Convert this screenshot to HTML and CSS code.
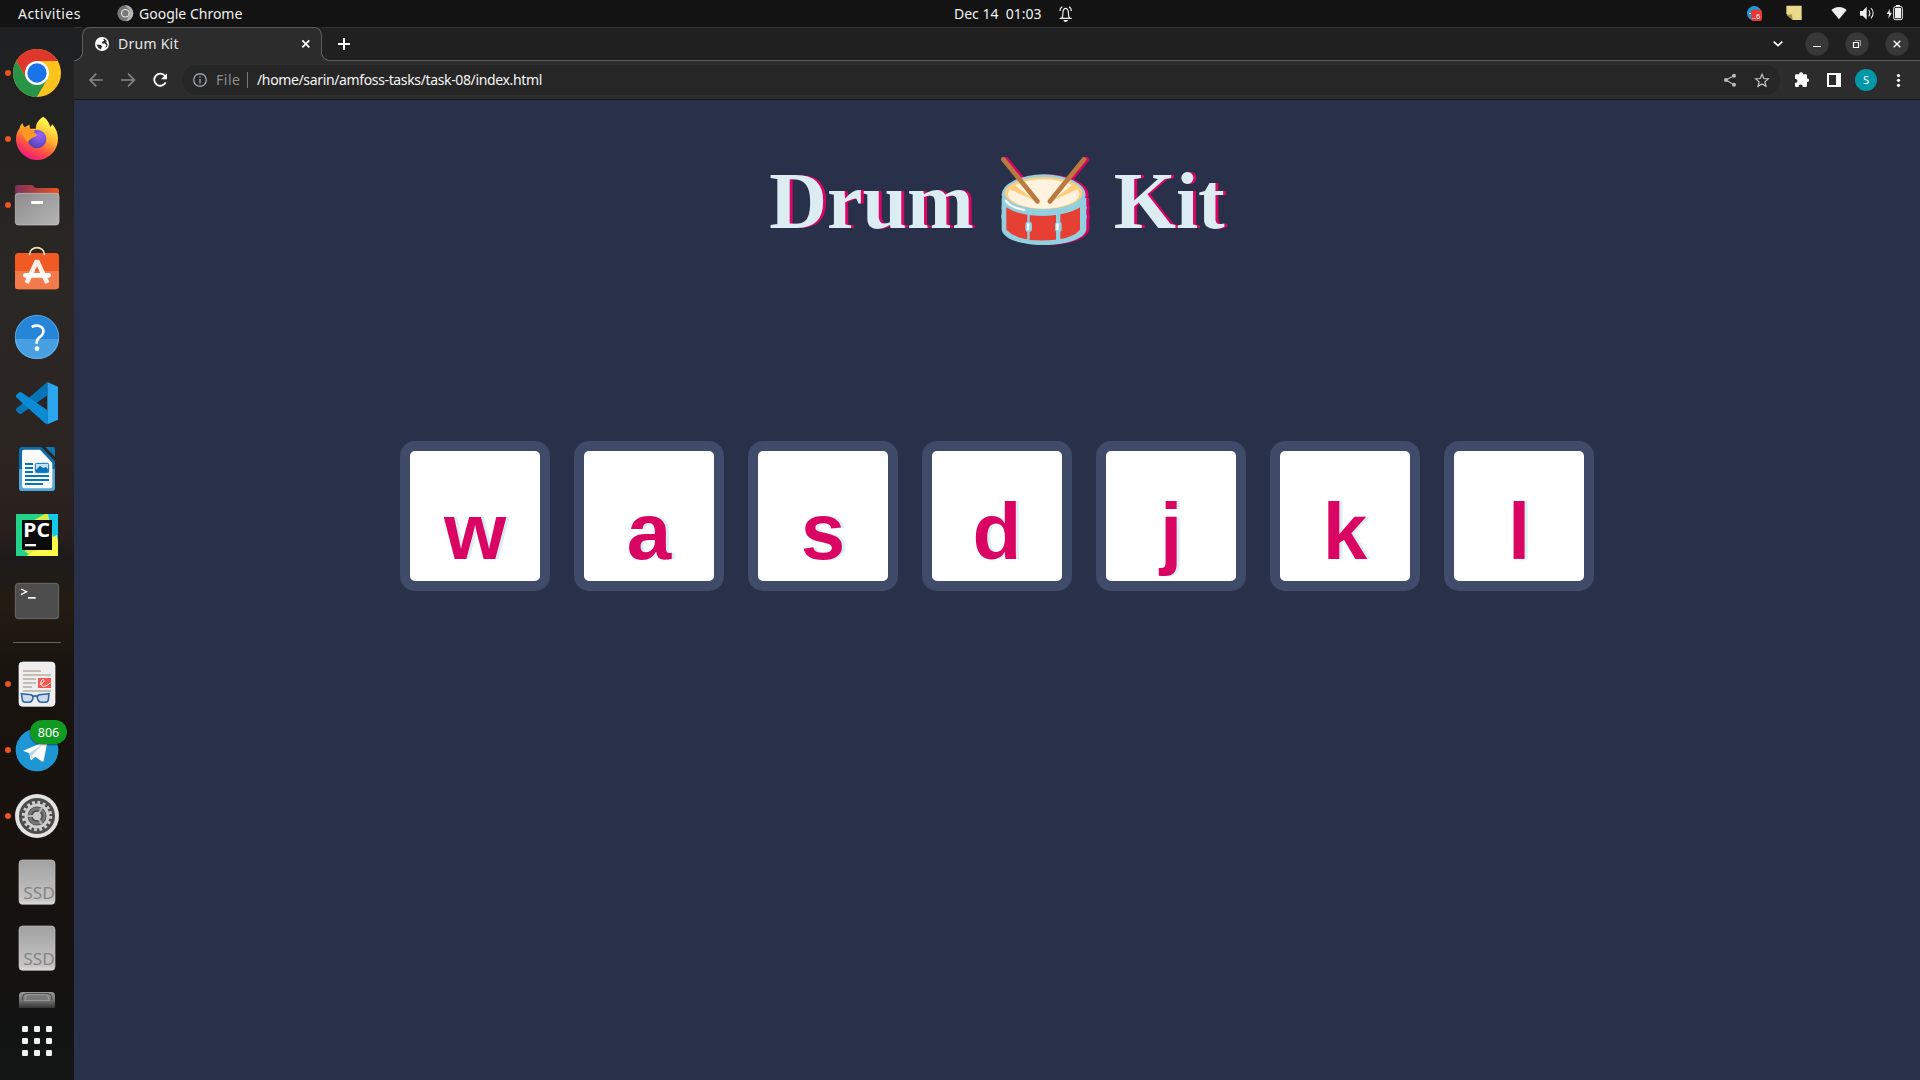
FILE: index.html
```html
<!DOCTYPE html>
<html lang="en">
<head>
<meta charset="utf-8">
<title>Drum Kit</title>
<link rel="stylesheet" href="styles.css">
</head>
<body>
<header class="topbar">
  <span class="activities">Activities</span>
  <span class="app-menu">
    <svg width="17" height="17" viewBox="0 0 17 17"><circle cx="8.3" cy="8.3" r="8" fill="#777"/><path d="M8 .3A8 8 0 0 1 16.300 8.300 8 8 0 0 1 9 16.300L12.500 10V5z" fill="#b5b5b5"/><circle cx="8.300" cy="8.300" r="4.300" fill="#e8e8e8"/><circle cx="8.300" cy="8.300" r="3.200" fill="#777"/></svg>
    <span class="app-name">Google Chrome</span>
  </span>
  <span class="clock">Dec 14&nbsp; 01:03</span>
  <svg class="bell" width="16" height="18" viewBox="388 12 48 54" fill="none" stroke="#eee" stroke-width="3.500"><path d="M396 52c5-5 3-12 4-20 1-7 4-10 8-10s7 3 8 10c1 8-1 15 4 20zM390 52h36M391 30c0-7 3-11 7-13M425 30c0-7-3-11-7-13"/><path d="M401 57h14c-1 8-13 8-14 0z" fill="#eee" stroke="none"/></svg>
  <svg class="tray" width="180" height="27" viewBox="180 0 540 81">
    <circle cx="223" cy="40" r="22" fill="#2497d5"/><path d="M206 41l17-7v10z" fill="#fff"/><rect x="213" y="29" width="33" height="34" rx="7" fill="#e53935"/><text x="216" y="57" class="tray-count">..6</text>
    <path d="M319 17h46v43h-27l-19-19z" fill="#ead98a"/><path d="M319 45l17-2 2 17z" fill="#a69345"/>
    <path d="M454 30c13-12 33-12 46 0l-23 28z" fill="#eee"/>
    <path d="M540 33h8l12-13v39l-12-12h-8z" fill="#eee"/><path d="M566 30q7 9 0 19M573 24q13 15 0 31" fill="none" stroke="#eee" stroke-width="3.200"/>
    <path d="M630 26l-10 16h7l-2 14 11-18h-7z" fill="#eee"/><rect x="641" y="20" width="26" height="39" rx="5" fill="none" stroke="#eee" stroke-width="3"/><path d="M645 24h18v31h-18zM648 15h12v5h-12z" fill="#eee"/>
  </svg>
</header>
<div class="desktop">
  <nav class="dock">
    <svg class="app" viewBox="0 30 222 198">
      <circle cx="24" cy="129" r="9" class="dot"/>
      <circle cx="111" cy="129" r="72" fill="#fcc31e"/><path d="M111 57a72 72 0 0 1 62 36H111L80 147 49 93a72 72 0 0 1 62-36z" fill="#df372c"/><path d="M49 93a72 72 0 0 0 62 108l31-54-62 0z" fill="#279447"/><circle cx="111" cy="129" r="36" fill="#fff"/><circle cx="111" cy="129" r="29" fill="#1a73e8"/>
    </svg>
    <svg class="app" viewBox="0 228 222 198">
      <defs><linearGradient id="fox" x1=".8" y1="0" x2=".3" y2="1"><stop offset=".15" stop-color="#fff04a"/><stop offset=".45" stop-color="#ffae2e"/><stop offset=".7" stop-color="#ff5540"/><stop offset="1" stop-color="#ed1382"/></linearGradient><radialGradient id="orb" cx=".65" cy=".3" r=".8"><stop offset="0" stop-color="#9a62ff"/><stop offset="1" stop-color="#4c3fac"/></radialGradient></defs>
      <circle cx="24" cy="327" r="9" class="dot"/>
      <path d="M130 260c13 9 17 19 21 30 3-1 4-4 5-8 12 12 18 27 18 45a63 63 0 0 1-126 0c0-15 5-25 11-33 1-6 4-11 9-15 0 7 3 11 7 14 4-4 8-8 14-9-1 6 0 9 2 12h17c-2-15 8-28 22-36z" fill="url(#fox)"/>
      <circle cx="111" cy="327" r="28" fill="url(#orb)"/><path d="M108 296c15-9 43 6 41 31 5-20-5-31-16-35z" fill="#ffd83f"/><path d="M66 312c11-7 19 0 31-5 6 2 13 4 14 7-3 8-14 8-18 12-5 5-8 5-9 12-7-6-8-15-18-26z" fill="#ff9a20"/><path d="M60 301q9-13 23-10 8 9 22 13l-10 10q-17-6-35-13z" fill="#ff9725"/>
    </svg>
    <svg class="app" viewBox="0 426 222 198">
      <defs><linearGradient id="folder"><stop stop-color="#7c305b"/><stop offset="1" stop-color="#e95420"/></linearGradient><linearGradient id="drawer" x2="1" y2="1"><stop stop-color="#8d8d8d"/><stop offset="1" stop-color="#b4b4b4"/></linearGradient></defs>
      <circle cx="24" cy="525" r="9" class="dot"/>
      <path d="M45 500v-27q0-8 8-8h42q5 0 10 9h64q8 0 8 8v30z" fill="url(#folder)"/><rect x="46" y="490" width="131" height="95" rx="9" fill="url(#drawer)" stroke="#c9c9c9" stroke-width="2"/><rect x="93" y="513" width="36" height="9" rx="3" fill="#fff"/>
    </svg>
    <svg class="app" viewBox="0 24 222 198">
      <path d="M89 74c0-28 44-28 44 0" fill="none" stroke="#f2deb0" stroke-width="5"/><rect x="45" y="69" width="132" height="109" rx="10" fill="#f15a24"/><path d="M45 123h132v45q0 10-10 10H55q-10 0-10-10z" fill="#f37a4b"/><path d="M89 76v-8M133 76v-8" stroke="#f2deb0" stroke-width="5"/><path d="M80 159L111 92l31 67" fill="none" stroke="#fff0e8" stroke-width="14" stroke-linejoin="bevel"/><rect x="69" y="129" width="84" height="14" rx="7" fill="#fff"/>
    </svg>
    <svg class="app" viewBox="0 222 222 198">
      <circle cx="111" cy="321" r="66" fill="#2585d8"/><path d="M45 327h132a66 60 0 0 1-132 0z" fill="#48a0e3"/><circle cx="111" cy="321" r="65" fill="none" stroke="#77b6ec" stroke-width="2"/><path d="M95 291q17-8 29 0 10 8 4 21-3 6-11 11-7 6-7 18" fill="none" stroke="#fff" stroke-width="8"/><circle cx="111" cy="356" r="7" fill="#fff"/>
    </svg>
    <svg class="app" viewBox="0 420 222 198">
      <path d="M142 456l32 14v99l-32 14z" fill="#2ba5ee"/><path d="M142 456v40L64 551q-4 3-8-1l-7-7q-3-4 1-8z" fill="#0874b8"/><path d="M142 583v-42L64 487q-4-3-8 1l-7 7q-3 4 1 8l85 77z" fill="#0b8bd5"/>
    </svg>
    <svg class="app" viewBox="0 18 222 198">
      <path d="M67 51h57l41 42v80q0 10-10 10H67q-10 0-10-10V61q0-10 10-10z" fill="#0b6ca7"/><path d="M57 117h108v56q0 10-10 10H67q-10 0-10-10z" fill="#51a8d6"/><path d="M72 59h48l37 39v70q0 7-7 7H72q-6 0-6-7V66q0-7 6-7z" fill="#fafafa"/><path d="M136 51h22q7 0 7 7v22z" fill="#1177b0"/><path d="M75 102h24M75 114h24M75 126h24M75 138h72M75 150h72M75 162h54" stroke="#0874b8" stroke-width="6"/><rect x="106" y="100" width="40" height="28" rx="4" fill="#c3e2f3" stroke="#0874b8" stroke-width="3"/><path d="M108 127v-7l12-13 10 8 8-5 7 10v7z" fill="#0874b8"/>
    </svg>
    <svg class="app" viewBox="0 216 222 198">
      <path d="M48 252h126v126H48z" fill="#24d38a"/><path d="M102 270l33-18h10l29 80v46H93l-19-15z" fill="#d8ed48"/><path d="M144 252h30v100l-17-40z" fill="#12c9ec"/><path d="M80 378l90-64 4 20v44z" fill="#fcf84a"/><path d="M66 270h90v90H66z" fill="#0b0b0b"/><text x="70" y="320" class="pc-text" textLength="80" lengthAdjust="spacingAndGlyphs">PC</text><path d="M75 342h33v7H75z" fill="#fff"/>
    </svg>
    <svg class="app" viewBox="0 414 222 198">
      <rect x="46" y="460" width="130" height="106" rx="9" fill="#4d4d4d" stroke="#737373" stroke-width="2.500"/><path d="M63 477l17 8-17 9" fill="none" stroke="#fff" stroke-width="4"/><path d="M84 501h23v5H84z" fill="#fff"/>
    </svg>
    <div class="separator"></div>
    <svg class="app" viewBox="0 3 222 198">
      <circle cx="24" cy="102" r="9" class="dot"/><rect x="57" y="36" width="108" height="133" rx="11" fill="#eee" stroke="#fff" stroke-width="2"/><path d="M69 63h54M69 75h84M69 87h39M69 99h39M69 111h27M69 123h84" stroke="#b5afa2" stroke-width="5"/><path d="M114 84h39v30h-39z" fill="#f3574f"/><path d="M119 103c10 0 18-14 9-14-6 0-9 20 3 20 8 0 14-6 20-10" fill="none" stroke="#fff" stroke-width="3"/><path d="M64 131l29 3q7 2 6 10-3 13-12 13H76q-8 0-9-8zM147 131l-29 3q-7 2-6 10 3 13 12 13h12q8 0 9-8z" fill="#cfdbe9" stroke="#2a62a7" stroke-width="4.500"/><path d="M99 140q6-5 13 0" fill="none" stroke="#2a62a7" stroke-width="5"/>
    </svg>
    <div class="badged">
      <svg class="app" viewBox="0 201 222 198">
        <circle cx="24" cy="300" r="9" class="dot"/><circle cx="111" cy="300" r="64" fill="#1f96d4"/><path d="M69 302l70-29q4-1 3 4l-11 55q-2 5-6 2l-19-14-10 9q-4 3-5-3l-3-16z" fill="#fff"/><path d="M88 310l38-26-28 30-2 13z" fill="#b5d5e7"/>
      </svg>
      <span class="badge">806</span>
    </div>
    <svg class="app" viewBox="0 399 222 198">
      <circle cx="24" cy="498" r="9" class="dot"/><circle cx="111" cy="498" r="66" fill="#e2e2e2"/><circle cx="111" cy="498" r="54" fill="#4c4c4c"/><circle cx="111" cy="498" r="41" fill="none" stroke="#d0d0d0" stroke-width="9" stroke-dasharray="8.500 7.601"/><circle cx="111" cy="498" r="33" fill="none" stroke="#d0d0d0" stroke-width="9"/><circle cx="111" cy="498" r="22" fill="none" stroke="#777" stroke-width="8"/><path d="M111 498H80M111 498l16-27M111 498l16 27" stroke="#b5b5b5" stroke-width="6"/><circle cx="111" cy="498" r="13" fill="#c9c9c9"/>
    </svg>
    <svg class="app" viewBox="0 27 222 198">
      <defs><linearGradient id="disk" x2="0" y2="1"><stop stop-color="#a1a1a1"/><stop offset=".9" stop-color="#c5c5c5"/><stop offset="1" stop-color="#ddd"/></linearGradient></defs>
      <rect x="57" y="60" width="108" height="133" rx="11" fill="url(#disk)" stroke="#c4c4c4" stroke-width="2"/><text x="70" y="177" class="ssd" textLength="95" lengthAdjust="spacingAndGlyphs">SSD</text>
    </svg>
    <svg class="app" viewBox="0 225 222 198">
      <rect x="57" y="258" width="108" height="133" rx="11" fill="url(#disk)" stroke="#c4c4c4" stroke-width="2"/><text x="70" y="375" class="ssd" textLength="95" lengthAdjust="spacingAndGlyphs">SSD</text>
    </svg>
    <svg class="app-cut" viewBox="0 423 222 81">
      <defs><linearGradient id="fade" x2="0" y2="1"><stop stop-color="#999"/><stop offset=".5" stop-color="#777"/><stop offset="1" stop-color="#333"/></linearGradient></defs>
      <path d="M57 504v-37q0-11 11-11h86q11 0 11 11v37z" fill="url(#fade)"/><path d="M68 480v-9q0-10 10-10h66q11 0 11 10v9" fill="none" stroke="#444" stroke-width="3"/><path d="M74 482l4-13q2-5 8-5h50q6 0 8 5l4 13z" fill="#777" stroke="#aaa" stroke-width="2"/>
    </svg>
    <svg class="app-grid" viewBox="0 504 222 216" fill="#f2f2f2">
      <rect x="66" y="558" width="18" height="18" rx="4"/><rect x="102" y="558" width="18" height="18" rx="4"/><rect x="138" y="558" width="18" height="18" rx="4"/><rect x="66" y="594" width="18" height="18" rx="4"/><rect x="102" y="594" width="18" height="18" rx="4"/><rect x="138" y="594" width="18" height="18" rx="4"/><rect x="66" y="630" width="18" height="18" rx="4"/><rect x="102" y="630" width="18" height="18" rx="4"/><rect x="138" y="630" width="18" height="18" rx="4"/>
    </svg>
  </nav>
  <div class="browser">
    <div class="tabstrip">
      <div class="tab-lead"></div>
      <div class="tab">
        <svg width="14" height="14" viewBox="0 0 14 14"><circle cx="7" cy="7" r="7" fill="#fff"/><path d="M1.500 7.500l4.500 .5 1 1.500-1 2.800-2.500-1zM7.500 2l1.500 .7v1L7 5v1.500h3l1.500 2L10 11l1.700-1 1-2.500-1.500-2 .5-1.500L9.500 1.800z" fill="#2c2c2c"/></svg>
        <span class="tab-title">Drum Kit</span>
        <svg width="10" height="10" viewBox="0 0 10 10" stroke="#fff" stroke-width="1.700"><path d="M1.300 1.300l7 7M8.300 1.300l-7 7"/></svg>
      </div>
      <div class="tab-rest">
        <svg width="12" height="12" viewBox="0 0 12 12" stroke="#fff" stroke-width="2"><path d="M0 6h12M6 0v12"/></svg>
        <svg class="window-controls" width="180" height="32" viewBox="180 84 540 96">
          <path d="M281 125l13 12 13-12" fill="none" stroke="#fff" stroke-width="5"/>
          <g fill="#383838"><circle cx="411" cy="132" r="35"/><circle cx="531" cy="132" r="35"/><circle cx="651" cy="132" r="35"/></g>
          <g fill="none" stroke="#fff"><path d="M399 139.500h24" stroke-width="3"/><path d="M520.500 127.500h15v15h-15z" stroke-width="3.500"/><path d="M525 121.500h16.500V138" stroke="#999" stroke-width="3"/><path d="M641 122l20 20M661 122l-20 20" stroke-width="4"/></g>
        </svg>
      </div>
    </div>
    <div class="toolbar">
      <svg class="nav-icons" width="94" height="38" viewBox="222 183 282 114" fill="none" stroke="#868686" stroke-width="5"><path d="M308 240h-37M289 221l-19 19 19 19M363 240h38M384 221l19 19-19 19"/><path d="M495 228a18 18 0 1 0 2 19" stroke="#fff" stroke-width="5.500"/><path d="M501 220v18h-18z" fill="#fff" stroke="none"/></svg>
      <div class="omnibox">
        <svg width="14" height="14" viewBox="0 0 14 14" fill="none" stroke="#9aa0a6" stroke-width="1.400"><circle cx="7" cy="7" r="6.300"/><path d="M7 6v4.500M7 3.300v1.500"/></svg>
        <span class="scheme">File</span><span class="divider"></span><span class="url">/home/sarin/amfoss-tasks/task-08/index.html</span>
        <svg class="omni-icons" width="60" height="30" viewBox="120 195 180 90"><path d="M162 227l-24 13 24 14" fill="none" stroke="#bbb" stroke-width="3.500"/><g fill="#bbb"><circle cx="162" cy="227" r="6"/><circle cx="138" cy="240" r="6"/><circle cx="162" cy="254" r="6"/></g><path d="M246 223l5.500 12.500 13.500 1-10.500 9 3.500 13.500-12-7-12 7 3.500-13.500-10.500-9 13.500-1z" fill="none" stroke="#ccc" stroke-width="3.500"/></svg>
      </div>
      <svg class="actions" width="140" height="38" viewBox="300 183 420 114">
        <path d="M345 227q0-4 4-4h9c-3-8 14-8 11 0h8q4 0 4 4v9c8-3 8 12 0 10v11q0 4-4 4h-9c2-10-14-10-12 0h-7q-4 0-4-4v-9c10 2 10-13 0-11z" fill="#fff"/>
        <path d="M441 219h42v42h-42zM447 225v30h21v-30z" fill="#fff" fill-rule="evenodd"/>
        <circle cx="558" cy="240" r="33" fill="#0097a7"/><text x="558" y="252" text-anchor="middle" class="avatar">S</text>
        <g fill="#fff"><circle cx="655.500" cy="226.500" r="4.800"/><circle cx="655.500" cy="241" r="4.800"/><circle cx="655.500" cy="256" r="4.800"/></g>
      </svg>
    </div>
    <main class="page">
      <h1 class="title">Drum <svg class="drum" viewBox="762 60 300 300">
        <path d="M785 204v25q-2 5 0 10v12q-3 8 0 18v27c0 27 50 49 126 49s128-23 128-49v-27q3-9 0-18v-12q3-5 0-10v-25z" fill="#92cfdf"/>
        <path d="M799 232q22 16 63 22v74q-41-6-63-29zM869 256q41 3 79-1v74q-39 4-79 1zM961 253q40-7 59-21v67q-15 20-59 28z" fill="#e64035"/>
        <ellipse cx="911" cy="195" rx="126" ry="62" fill="#92cfdf"/><ellipse cx="911" cy="189" rx="117" ry="48" fill="#ffcb7c"/><ellipse cx="911" cy="192" rx="107" ry="44" fill="#fff3e0"/>
        <path d="M809 178q5-6 17-12l59 46zM1013 178q-6-7-18-12l-58 46z" fill="#ffcb7c"/><path d="M797 212q13 20 55 28" fill="none" stroke="#fff" stroke-width="6" stroke-linecap="round"/>
        <rect x="856" y="275" width="20" height="31" rx="9" fill="#92cfdf"/><rect x="945" y="275" width="20" height="31" rx="9" fill="#92cfdf"/><rect x="861" y="280" width="7" height="21" rx="3" fill="#fff"/><rect x="949" y="280" width="7" height="21" rx="3" fill="#fff"/>
        <path d="M790 88l102 126M1032 88L930 214" stroke="#ba793e" stroke-width="14" stroke-linecap="round"/>
      </svg> Kit</h1>
      <div class="set">
        <button class="key">w</button><button class="key">a</button><button class="key">s</button><button class="key">d</button><button class="key">j</button><button class="key">k</button><button class="key">l</button>
      </div>
    </main>
  </div>
</div>
</body>
</html>
```
FILE: styles.css
```css
* { box-sizing: border-box; }
body { margin: 0; width: 1920px; height: 1080px; overflow: hidden; display: flex; flex-direction: column; font-family: "Noto Sans", sans-serif; }
svg { display: block; flex: none; }

.topbar { height: 27px; flex: none; display: flex; align-items: center; background: #131313; color: #f0f0f0; font-size: 14px; white-space: nowrap; }
.activities { width: 117px; padding-left: 18px; flex: none; letter-spacing: .45px; }
.app-menu { display: flex; align-items: center; gap: 5px; width: 837px; flex: none; }
.clock { width: 105px; flex: none; }
.tray { margin-left: auto; }
.tray-count { font-size: 22px; fill: #fff; }

.desktop { flex: 1; display: flex; min-height: 0; }
.dock { width: 74px; flex: none; padding-top: 13px; display: flex; flex-direction: column; background: linear-gradient(#1f2022 0, #242322 130px, #2b2725 260px, #2b2522 420px, #2a201d 500px, #1c1a1a 535px, #241c13 575px, #18130f 650px, #17120e 850px, #121313 1000px, #141616 100%); }
.app { width: 74px; height: 66px; }
.app-cut { width: 74px; height: 27px; }
.app-grid { width: 74px; height: 72px; }
.dot { fill: #e95420; }
.separator { width: 48px; height: 1px; margin: 8px auto; background: #666; flex: none; }
.badged { position: relative; }
.badge { position: absolute; left: 30px; top: 3px; width: 37px; height: 24px; border-radius: 12px; background: #119a21; color: #fff; font-size: 12.5px; line-height: 25px; text-align: center; box-shadow: 0 1px 2px #0008; }
.ssd { font: 49px "Noto Sans", sans-serif; fill: #858585; }
.pc-text { font: bold 56px "Noto Sans", sans-serif; fill: #fff; }

.browser { flex: 1; display: flex; flex-direction: column; min-width: 0; }
.tabstrip { height: 34px; flex: none; display: flex; background: #202020; }
.tab-lead { width: 8px; border-top: 1px solid #333; border-bottom: 1px solid #5c5c5c; }
.tab { position: relative; width: 240px; display: flex; align-items: center; padding: 0 10px 1px 12px; background: #2c2c2c; border: 1px solid #5c5c5c; border-bottom: 0; border-radius: 8px 8px 0 0; color: #e6e6e6; font-size: 14px; }
.tab::before, .tab::after { content: ""; position: absolute; bottom: 0; width: 9px; height: 9px; }
.tab::before { left: -9px; background: radial-gradient(circle at 0 0, #202020 7.7px, #5c5c5c 8.2px 8.8px, #2c2c2c 9.3px); }
.tab::after { right: -9px; background: radial-gradient(circle at 100% 0, #202020 7.7px, #5c5c5c 8.2px 8.8px, #2c2c2c 9.3px); }
.tab-title { margin-left: 9px; flex: 1; letter-spacing: .25px; line-height: 18px; padding-bottom: 1px; }
.tab-rest { flex: 1; display: flex; align-items: center; justify-content: space-between; padding-left: 16px; border-top: 1px solid #333; border-bottom: 1px solid #5c5c5c; }
.toolbar { height: 39px; flex: none; display: flex; background: #2c2c2c; border-bottom: 1px solid #161616; }
.omnibox { flex: 1; height: 30px; margin: 4px 0 0 14px; padding-left: 11px; border-radius: 15px; background: #262626; display: flex; align-items: center; font-size: 14px; }
.scheme { margin-left: 9px; width: 31px; color: #8d8d8d; letter-spacing: .5px; padding-bottom: 1px; }
.divider { width: 1px; height: 16px; background: #777; }
.url { margin-left: 9px; color: #f5f5f5; letter-spacing: -.36px; padding-bottom: 1px; }
.omni-icons { margin-left: auto; }
.avatar { font-size: 34px; fill: #fff; }

.page { flex: 1; background: #283149; text-align: center; }
.title { margin: 50px 0 0; height: 100px; font: bold 80px/100px "Liberation Serif", serif; color: #dbedf3; text-shadow: 3px 0 #da0463; }
.drum { display: inline-block; width: 100px; height: 100px; vertical-align: -22px; filter: drop-shadow(3px 0 0 #da0463); }
.set { display: flex; justify-content: center; gap: 24px; margin-top: 191px; }
.key { width: 150px; height: 150px; padding: 1px 0 0; border: 10px solid #404b69; border-radius: 15px; background: #fff; color: #da0463; font: bold 80px/160px "Liberation Sans", Arial, sans-serif; text-shadow: 3px 0 #dbedf3; }
```
